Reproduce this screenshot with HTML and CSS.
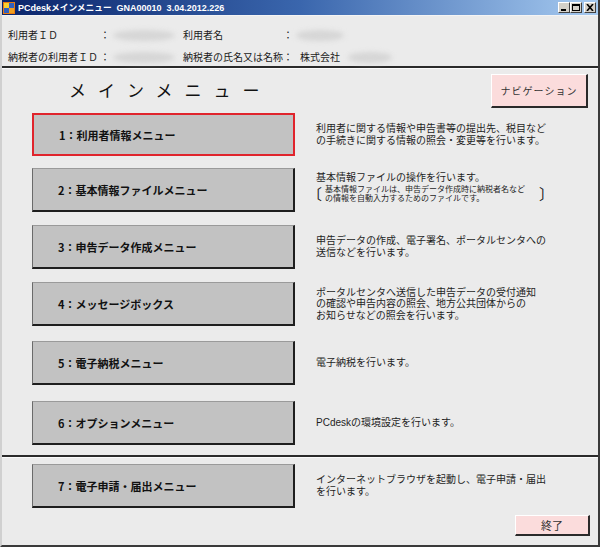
FILE: index.html
```html
<!DOCTYPE html>
<html lang="ja">
<head>
<meta charset="utf-8">
<title>PCdesk メインメニュー</title>
<link rel="stylesheet" href="styles.css">
</head>
<body>
<div class="window">
  <div class="titlebar">
    <svg class="app-icon" width="12" height="12" viewBox="0 0 12 12">
      <rect x="0" y="0" width="12" height="12" fill="#e87a10"/>
      <rect x="1" y="1" width="5" height="5" fill="#f8d030"/>
      <rect x="6" y="1" width="5" height="5" fill="#3060c0"/>
      <rect x="1" y="6" width="5" height="5" fill="#3060c0"/>
      <rect x="6" y="6" width="5" height="5" fill="#f0a020"/>
    </svg>
    <span class="title-text">PCdesk<span class="title-jp">メインメニュー</span>&nbsp;&nbsp;GNA00010&nbsp;&nbsp;3.04.2012.226</span>
    <div class="controls">
      <span class="ctl"><svg width="8" height="7" viewBox="0 0 8 7"><rect x="1" y="5" width="5" height="2" fill="#000"/></svg></span>
      <span class="ctl"><svg width="8" height="7" viewBox="0 0 8 7"><rect x="0.5" y="0.5" width="7" height="6" fill="none" stroke="#000"/><rect x="0" y="0" width="8" height="2" fill="#000"/></svg></span>
      <span class="ctl ctl-close"><svg width="8" height="7" viewBox="0 0 8 7"><path d="M1 0 L7 7 M7 0 L1 7" stroke="#000" stroke-width="1.6"/></svg></span>
    </div>
  </div>

  <div class="header">
    <span class="h-label">利用者ＩＤ</span><span class="h-colon">：</span><span class="h-val"><span class="blur"></span></span>
    <span class="h-label">利用者名</span><span class="h-colon">：</span><span class="h-val"><span class="blur blur-wide"></span></span>
    <span class="h-label">納税者の利用者ＩＤ</span><span class="h-colon">：</span><span class="h-val"><span class="blur"></span></span>
    <span class="h-label">納税者の氏名又は名称</span><span class="h-colon">：</span><span class="h-val">株式会社<span class="blur blur-small"></span></span>
  </div>
  <div class="rule"></div>

  <div class="main">
    <div class="heading-row">
      <h1 class="heading">メインメニュー</h1>
      <button class="pink-btn nav-btn">ナビゲーション</button>
    </div>

    <div class="menu-row r1">
      <button class="menu-btn selected">1：利用者情報メニュー</button>
      <p class="desc">利用者に関する情報や申告書等の提出先、税目など<br>の手続きに関する情報の照会・変更等を行います。</p>
    </div>
    <div class="menu-row r2">
      <button class="menu-btn">2：基本情報ファイルメニュー</button>
      <div class="desc desc-2">
        <p>基本情報ファイルの操作を行います。</p>
        <div class="note">
          <span class="bracket bracket-open">〔</span>
          <span class="note-text">基本情報ファイルは、申告データ作成時に納税者名など<br>の情報を自動入力するためのファイルです。</span>
          <span class="bracket">〕</span>
        </div>
      </div>
    </div>
    <div class="menu-row r3">
      <button class="menu-btn">3：申告データ作成メニュー</button>
      <p class="desc">申告データの作成、電子署名、ポータルセンタへの<br>送信などを行います。</p>
    </div>
    <div class="menu-row r4">
      <button class="menu-btn">4：メッセージボックス</button>
      <p class="desc">ポータルセンタへ送信した申告データの受付通知<br>の確認や申告内容の照会、地方公共団体からの<br>お知らせなどの照会を行います。</p>
    </div>
    <div class="menu-row r5">
      <button class="menu-btn">5：電子納税メニュー</button>
      <p class="desc">電子納税を行います。</p>
    </div>
    <div class="menu-row r6">
      <button class="menu-btn">6：オプションメニュー</button>
      <p class="desc">PCdeskの環境設定を行います。</p>
    </div>
  </div>

  <div class="rule rule-lower"></div>

  <div class="main">
    <div class="menu-row r7">
      <button class="menu-btn">7：電子申請・届出メニュー</button>
      <p class="desc">インターネットブラウザを起動し、電子申請・届出<br>を行います。</p>
    </div>
    <div class="footer">
      <button class="pink-btn exit-btn">終了</button>
    </div>
  </div>
</div>
</body>
</html>
```

FILE: styles.css
```css
* { box-sizing: border-box; margin: 0; padding: 0; }

body {
  width: 600px;
  height: 547px;
  overflow: hidden;
  background: #ebebeb;
  font-family: "Noto Sans CJK JP", "Noto Sans", sans-serif;
  color: #1a1a1a;
}

.window {
  width: 600px;
  height: 547px;
  background: #ebebeb;
  border-left: 2px solid #d0d0d0;
  border-right: 2px solid #3a3a3a;
  border-bottom: 2px solid #3a3a3a;
  display: flex;
  flex-direction: column;
}

/* title bar */
.titlebar {
  height: 16px;
  display: flex;
  align-items: center;
  background: linear-gradient(to right, #0a246a 0%, #3a66ad 50%, #a6caf0 100%);
  padding-left: 1px;
  border-bottom: 1px solid #f4f4f4;
}
.app-icon { flex: none; margin-right: 3px; }
.title-text {
  color: #fff;
  font-family: "Liberation Sans", "Noto Sans CJK JP", sans-serif;
  font-weight: bold;
  font-size: 9px;
  line-height: 12px;
  white-space: nowrap;
  padding-top: 1px;
}
.title-jp {
  font-family: "Noto Sans CJK JP", sans-serif;
  font-size: 8.7px;
}
.controls {
  margin-left: auto;
  display: flex;
  margin-right: 2px;
}
.ctl {
  width: 12px;
  height: 11px;
  background: #d4d0c8;
  border-top: 1px solid #fff;
  border-left: 1px solid #fff;
  border-right: 1px solid #404040;
  border-bottom: 1px solid #404040;
  display: flex;
  align-items: center;
  justify-content: center;
}
.ctl-close { margin-left: 2px; }

/* header */
.header {
  display: grid;
  grid-template-columns: 92px 10px 73px 100px 10px 1fr;
  grid-auto-rows: 18px;
  row-gap: 4px;
  align-items: center;
  padding: 10px 0 0 6px;
  font-size: 10px;
  line-height: 18px;
  white-space: nowrap;
}
.h-val { display: flex; align-items: center; padding-left: 3px; }
.h-colon + .h-val:last-child { padding-left: 7px; }
.blur {
  display: inline-block;
  width: 62px;
  height: 11px;
  border-radius: 50%;
  background: #d6d6d6;
  filter: blur(2.5px);
}
.blur-wide { width: 48px; }
.blur-small { width: 44px; margin-left: 8px; }

.rule {
  height: 3px;
  border-top: 2px solid #2a2a2a;
  border-bottom: 1px solid #fafafa;
  flex: none;
}
.rule-lower { margin-top: 10px; }

/* main */
.main {
  display: flex;
  flex-direction: column;
  padding-left: 30px;
}
.heading-row {
  display: flex;
  align-items: center;
  margin-top: 5px;
  margin-left: -30px;
  padding-left: 67px;
  padding-right: 10px;
  height: 34px;
}
.heading {
  font-size: 17px;
  font-weight: normal;
  letter-spacing: 12px;
  color: #111;
  margin-top: -3px;
}
.pink-btn {
  font-family: "Noto Sans CJK JP", sans-serif;
  background: #fbdcdc;
  color: #333;
  border-top: 1px solid #fff;
  border-left: 1px solid #fff;
  border-right: 2px solid #2a2a2a;
  border-bottom: 2px solid #2a2a2a;
  cursor: pointer;
}
.nav-btn {
  margin-left: auto;
  width: 97px;
  height: 34px;
  font-size: 10px;
  letter-spacing: 1px;
}

.menu-row {
  display: flex;
  align-items: center;
}
.r1 { margin-top: 5px; }
.r2 { margin-top: 12px; }
.r3 { margin-top: 13px; }
.r4 { margin-top: 13px; }
.r5 { margin-top: 15px; }
.r6 { margin-top: 16px; }
.r7 { margin-top: 6px; }

.menu-btn {
  flex: none;
  width: 263px;
  height: 44px;
  text-align: left;
  padding-left: 25px;
  background: #c2c2c2;
  font-family: "Noto Sans CJK JP", sans-serif;
  font-weight: bold;
  font-size: 11px;
  color: #111;
  border-top: 1px solid #9a9a9a;
  border-left: 1px solid #6a6a6a;
  border-right: 2px solid #1e1e1e;
  border-bottom: 2px solid #1e1e1e;
  cursor: pointer;
}
.menu-btn.selected {
  height: 43px;
  border: 2px solid #e0242c;
  padding-left: 25px;
}

.desc {
  margin-left: 21px;
  font-family: "Liberation Sans", "Noto Sans CJK JP", sans-serif;
  font-size: 10px;
  line-height: 11.6px;
  color: #1e1e1e;
  white-space: nowrap;
}
.desc-2 { margin-top: -4px; }
.desc-2 p { margin-bottom: 1px; }
.note {
  display: flex;
  align-items: center;
}
.bracket {
  font-family: "Noto Sans CJK JP", sans-serif;
  font-size: 15px;
  line-height: 18px;
  color: #222;
}
.bracket-open { margin-left: -9px; margin-right: 3px; }
.note-text {
  font-size: 8px;
  line-height: 9.3px;
  margin: 0 14px 0 0;
}

.footer {
  display: flex;
  justify-content: flex-end;
  margin-top: 7px;
  padding-right: 8px;
}
.exit-btn {
  width: 75px;
  height: 21px;
  font-size: 11px;
}
```
